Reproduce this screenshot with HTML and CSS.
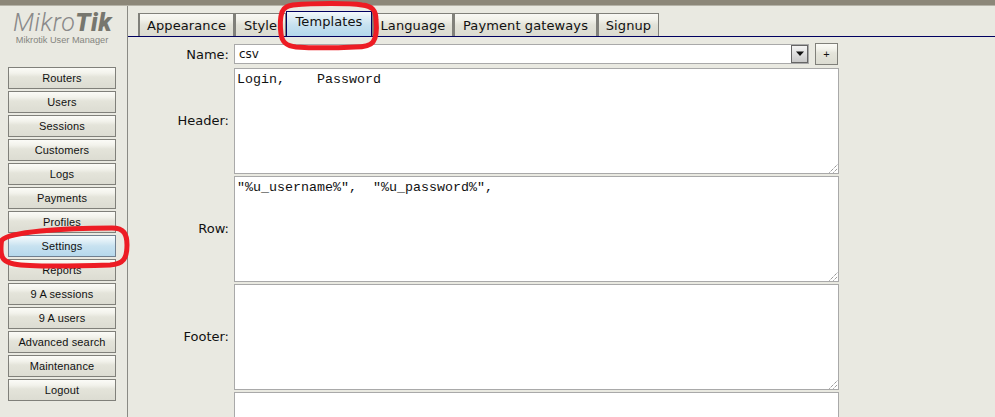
FILE: index.html
```html
<!DOCTYPE html>
<html>
<head>
<meta charset="utf-8">
<title>Mikrotik User Manager</title>
<link rel="stylesheet" href="styles.css">
</head>
<body>
<div class="topbar"></div>
<div class="main">
  <aside class="sidebar">
    <div class="logo"><span class="logo-thin">Mikro</span><span class="logo-bold">Tik</span></div>
    <div class="subtitle">Mikrotik User Manager</div>
    <nav class="menu">
      <a class="menu-btn">Routers</a>
      <a class="menu-btn">Users</a>
      <a class="menu-btn">Sessions</a>
      <a class="menu-btn">Customers</a>
      <a class="menu-btn">Logs</a>
      <a class="menu-btn">Payments</a>
      <a class="menu-btn">Profiles</a>
      <a class="menu-btn active">Settings</a>
      <a class="menu-btn">Reports</a>
      <a class="menu-btn">9 A sessions</a>
      <a class="menu-btn">9 A users</a>
      <a class="menu-btn">Advanced search</a>
      <a class="menu-btn">Maintenance</a>
      <a class="menu-btn">Logout</a>
    </nav>
  </aside>
  <section class="content">
    <div class="tabs">
      <a class="tab t-appearance">Appearance</a>
      <a class="tab t-style">Style</a>
      <a class="tab t-templates active">Templates</a>
      <a class="tab t-language">Language</a>
      <a class="tab t-payment">Payment gateways</a>
      <a class="tab t-signup">Signup</a>
    </div>
    <div class="form">
      <label class="label name-label">Name:</label>
      <div class="name-row">
        <div class="select"><span class="select-value">csv</span><span class="select-arrow"><svg width="10" height="6" viewBox="0 0 10 6"><path d="M1 0.5h8L5 5z" fill="#111"/></svg></span></div>
        <button class="plus">+</button>
      </div>
      <label class="label">Header:</label>
      <div class="area">Login,    Password<svg class="grip" width="9" height="9" viewBox="0 0 9 9"><path d="M0.5 8.5L8.5 0.5M4.5 8.5L8.5 4.5" stroke="#666" stroke-dasharray="1 1" fill="none"/></svg></div>
      <label class="label">Row:</label>
      <div class="area">"%u_username%",  "%u_password%",<svg class="grip" width="9" height="9" viewBox="0 0 9 9"><path d="M0.5 8.5L8.5 0.5M4.5 8.5L8.5 4.5" stroke="#666" stroke-dasharray="1 1" fill="none"/></svg></div>
      <label class="label">Footer:</label>
      <div class="area"><svg class="grip" width="9" height="9" viewBox="0 0 9 9"><path d="M0.5 8.5L8.5 0.5M4.5 8.5L8.5 4.5" stroke="#666" stroke-dasharray="1 1" fill="none"/></svg></div>
      <label class="label"></label>
      <div class="area"></div>
    </div>
  </section>
</div>
<svg class="marks" width="995" height="417" viewBox="0 0 995 417">
  <path d="M293 5 C315 3 350 3 362 5 C372 6 376 10 376 20 C377 30 376 38 373 42 C370 46 364 47 355 47 C335 48 310 48 296 47 C286 46 282 42 281 34 C280 26 280 18 282 12 C284 7 288 6 293 5Z" fill="none" stroke="#ed1c24" stroke-width="5"/>
  <path d="M2 240 C10 232 60 228 112 228 C124 228 127 234 127 245 C127 258 124 264 110 265 C80 266 30 267 14 264 C4 262 1 258 1 250 C1 245 1 242 2 240Z" fill="none" stroke="#ed1c24" stroke-width="5"/>
</svg>
</body>
</html>
```
FILE: styles.css
```css
* { box-sizing: border-box; }
html, body { margin: 0; padding: 0; }
body {
  position: relative;
  width: 995px;
  height: 417px;
  overflow: hidden;
  background: #e9e9e1;
  font-family: "DejaVu Sans", sans-serif;
  color: #111;
}
.topbar {
  height: 6px;
  background: #8c8779;
  border-bottom: 1px solid #b5b3a8;
}
.main { display: flex; height: 411px; }
.sidebar {
  width: 128px;
  flex: none;
  border-right: 1px solid #8a8a84;
  padding: 5px 0 0 5px;
}
.logo {
  width: 112px;
  padding-left: 8px;
  font-family: Roboto, "Liberation Sans", sans-serif;
  font-size: 25px;
  line-height: 24px;
  font-style: italic;
  color: #8a8a8a;
  white-space: nowrap;
}
.logo-thin { font-weight: 300; letter-spacing: 0.5px; }
.logo-bold { font-weight: 900; color: #77776f; letter-spacing: 0.5px; }
.subtitle {
  width: 114px;
  margin-top: -1px;
  text-align: center;
  font-family: "Liberation Sans", sans-serif;
  font-size: 9.2px;
  line-height: 12px;
  color: #85857f;
  white-space: nowrap;
}
.menu {
  display: flex;
  flex-direction: column;
  gap: 2px;
  margin-top: 21px;
  margin-left: 3px;
}
.menu-btn {
  display: block;
  width: 108px;
  height: 22px;
  border: 1px solid #80807a;
  background: linear-gradient(#fbfbf7 0, #f3f3ec 25%, #e4e4da 45%, #dcdcd2 100%);
  font-family: "Liberation Sans", sans-serif;
  font-size: 11px;
  letter-spacing: 0.15px;
  line-height: 20px;
  text-align: center;
  color: #111;
  white-space: nowrap;
}
.menu-btn.active {
  border-color: #708090;
  background: linear-gradient(#f6fbfd 0, #e5f2f8 20%, #c8e2f0 50%, #b6d9ec 100%);
}
.content { flex: 1; min-width: 0; }
.tabs {
  display: flex;
  align-items: flex-end;
  height: 31px;
  padding-left: 10px;
  border-bottom: 1px solid #000060;
}
.tab {
  display: block;
  height: 23px;
  border: 1px solid #80807a;
  border-bottom: 0;
  border-left-width: 2px;
  padding-top: 3px;
  text-align: center;
  background: linear-gradient(#f8f8f4 0, #f2f2eb 25%, #e2e2d8 50%, #dbdbd0 100%);
  font-size: 13px;
  letter-spacing: 0.1px;
  line-height: 17px;
  color: #111;
  white-space: nowrap;
}
.t-appearance { width: 96px; }
.t-style { width: 52px; }
.t-templates { width: 86px; }
.t-language { width: 81px; }
.t-payment { width: 144px; }
.t-signup { width: 62px; }
.tab.active {
  height: 25px;
  padding-top: 1px;
  border: 1px solid #000060;
  border-bottom: 0;
  background: linear-gradient(#f4f9fb 0, #e6f2f7 15%, #c6e1f0 55%, #b4d8ec 100%);
}
.form {
  display: grid;
  grid-template-columns: 101px 605px;
  column-gap: 5px;
  row-gap: 2px;
  padding-top: 6px;
  align-items: center;
}
.label {
  font-size: 13px;
  line-height: 16px;
  text-align: right;
  color: #111;
}
.name-row { display: flex; align-items: flex-start; gap: 6px; height: 23px; }
.select {
  display: flex;
  align-items: center;
  justify-content: space-between;
  width: 575px;
  height: 20px;
  margin-top: 1px;
  border: 1px solid #a9a9a9;
  background: #fff;
}
.select-value {
  padding-left: 4px;
  font-size: 12px;
}
.select-arrow {
  display: flex;
  align-items: center;
  justify-content: center;
  width: 17px;
  height: 18px;
  border: 1px solid #666;
  background: linear-gradient(#f4f4f4, #c8c8c8);
}
.plus {
  width: 23px;
  height: 22px;
  padding: 0;
  border: 1px solid #80807a;
  background: linear-gradient(#fbfbf7 0, #f3f3ec 25%, #e4e4da 45%, #dcdcd2 100%);
  font-family: "Liberation Sans", sans-serif;
  font-size: 11px;
  color: #111;
}
.area {
  position: relative;
  height: 106px;
  border: 1px solid #a9a9a9;
  background: #fff;
  padding: 3px 2px;
  font-family: "Liberation Mono", monospace;
  font-size: 13.33px;
  line-height: 15px;
  color: #111;
  white-space: pre;
}
.grip { position: absolute; right: 0; bottom: 0; }
.marks { position: absolute; left: 0; top: 0; pointer-events: none; }
```
